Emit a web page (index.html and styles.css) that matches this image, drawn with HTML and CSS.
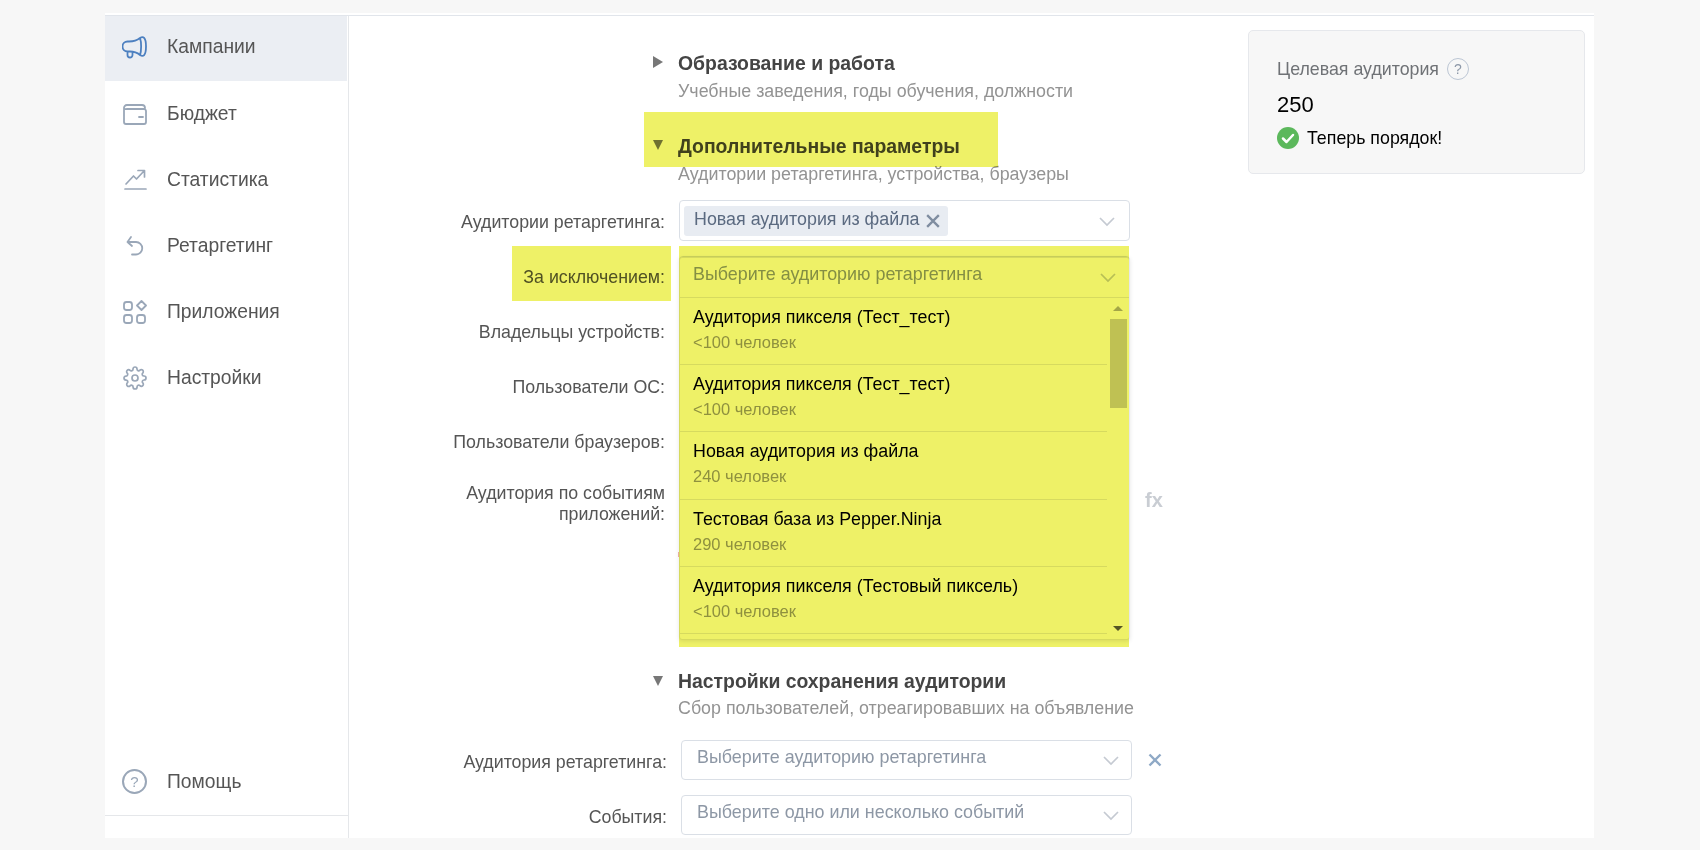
FILE: index.html
```html
<!DOCTYPE html>
<html lang="ru">
<head>
<meta charset="utf-8">
<title>Кампании</title>
<link rel="stylesheet" href="styles.css">
</head>
<body>
<div class="page">
  <div class="layout">
    <aside class="sidebar">
      <nav class="nav">
        <a class="nav-item active">
          <svg class="nav-icon" viewBox="0 0 26 24"><path d="M18 3C15 5.500 11 6.500 7 6.500H5.500a5 5 0 0 0 0 10H8c4 0 7 1 10 3.500M18 3c3-2 6-1 6 8.500S21 22 18 20M18 3c1.500 4 1.500 13 0 17M5.500 16.500V20a2.500 2.500 0 0 0 5 0v-3"/></svg>
          <span>Кампании</span>
        </a>
        <a class="nav-item">
          <svg class="nav-icon" viewBox="0 0 26 24"><path d="M2 6.500V20a2 2 0 0 0 2 2h18a2 2 0 0 0 2-2V9a2 2 0 0 0-2-2H4.500A2.500 2.500 0 0 1 2 6.500 3 3 0 0 1 5 3h15a3 3 0 0 1 3 3M17 15h4"/></svg>
          <span>Бюджет</span>
        </a>
        <a class="nav-item">
          <svg class="nav-icon thin" viewBox="0 0 26 24"><path d="M3 21h21M4 16l7.500-8 3 3L22 3M16 2.500h6.500V9"/></svg>
          <span>Статистика</span>
        </a>
        <a class="nav-item">
          <svg class="nav-icon" viewBox="0 0 26 24"><path d="M9 3L5.500 8l4.500 4M5.500 8H14a6 6 0 0 1 0 12.500H10"/></svg>
          <span>Ретаргетинг</span>
        </a>
        <a class="nav-item">
          <svg class="nav-icon" viewBox="0 0 26 24"><rect x="2" y="2" width="8" height="8" rx="2.500"/><rect x="2" y="15" width="8" height="8" rx="2.500"/><rect x="15" y="15" width="8" height="8" rx="2.500"/><path d="M19.500 1l4.500 4.500-4.500 4.500-4.500-4.500z"/></svg>
          <span>Приложения</span>
        </a>
        <a class="nav-item">
          <svg class="nav-icon gear" viewBox="0 0 24 24"><circle cx="12" cy="12" r="3"/><path d="M19.4 15a1.65 1.65 0 0 0 .33 1.82l.06.06a2 2 0 0 1 0 2.83 2 2 0 0 1-2.83 0l-.06-.06a1.65 1.65 0 0 0-1.82-.33 1.65 1.65 0 0 0-1 1.51V21a2 2 0 0 1-2 2 2 2 0 0 1-2-2v-.09A1.65 1.65 0 0 0 9 19.4a1.65 1.65 0 0 0-1.82.33l-.06.06a2 2 0 0 1-2.83 0 2 2 0 0 1 0-2.83l.06-.06a1.65 1.65 0 0 0 .33-1.82 1.65 1.65 0 0 0-1.51-1H3a2 2 0 0 1-2-2 2 2 0 0 1 2-2h.09A1.65 1.65 0 0 0 4.6 9a1.65 1.65 0 0 0-.33-1.82l-.06-.06a2 2 0 0 1 0-2.83 2 2 0 0 1 2.83 0l.06.06a1.65 1.65 0 0 0 1.82.33H9a1.65 1.65 0 0 0 1-1.51V3a2 2 0 0 1 2-2 2 2 0 0 1 2 2v.09a1.65 1.65 0 0 0 1 1.51 1.65 1.65 0 0 0 1.82-.33l.06-.06a2 2 0 0 1 2.83 0 2 2 0 0 1 0 2.83l-.06.06a1.65 1.65 0 0 0-.33 1.82V9a1.65 1.65 0 0 0 1.51 1H21a2 2 0 0 1 2 2 2 2 0 0 1-2 2h-.09a1.65 1.65 0 0 0-1.51 1z"/></svg>
          <span>Настройки</span>
        </a>
      </nav>
      <a class="nav-item help">
        <span class="help-icon">?</span>
        <span>Помощь</span>
      </a>
      <div class="sidebar-foot"></div>
    </aside>

    <main class="form">
      <section class="group first">
        <div class="group-head"><span class="arrow-right"></span><h3>Образование и работа</h3></div>
        <p class="group-sub">Учебные заведения, годы обучения, должности</p>
      </section>

      <section class="group second">
        <div class="group-head"><span class="arrow-down"></span><h3>Дополнительные параметры</h3></div>
        <p class="group-sub">Аудитории ретаргетинга, устройства, браузеры</p>
        <div class="rows">
          <div class="row">
            <label class="row-label">Аудитории ретаргетинга:</label>
            <div class="select tall">
              <span class="tag">Новая аудитория из файла<svg class="tag-x" viewBox="0 0 12 12"><path d="M1 1l10 10M11 1L1 11"/></svg></span>
              <svg class="chevron" viewBox="0 0 16 10"><path d="M1 1l7 7 7-7"/></svg>
            </div>
          </div>
          <div class="row">
            <label class="row-label">За исключением:</label>
            <div class="select"></div>
          </div>
          <div class="row">
            <label class="row-label">Владельцы устройств:</label>
            <div class="select"></div>
          </div>
          <div class="row">
            <label class="row-label">Пользователи ОС:</label>
            <div class="select"></div>
          </div>
          <div class="row">
            <label class="row-label">Пользователи браузеров:</label>
            <div class="select"></div>
          </div>
          <div class="row multi">
            <label class="row-label">Аудитория по событиям приложений:</label>
            <div class="select"></div>
            <span class="fx">fx</span>
          </div>
        </div>
      </section>

      <section class="group third">
        <div class="group-head"><span class="arrow-down"></span><h3>Настройки сохранения аудитории</h3></div>
        <p class="group-sub">Сбор пользователей, отреагировавших на объявление</p>
        <div class="rows lower">
          <div class="row">
            <label class="row-label">Аудитория ретаргетинга:</label>
            <div class="select">
              <span class="placeholder">Выберите аудиторию ретаргетинга</span>
              <svg class="chevron" viewBox="0 0 16 10"><path d="M1 1l7 7 7-7"/></svg>
            </div>
            <svg class="remove" viewBox="0 0 14 14"><path d="M1.500 1.500l11 11M12.500 1.500l-11 11"/></svg>
          </div>
          <div class="row">
            <label class="row-label">События:</label>
            <div class="select">
              <span class="placeholder">Выберите одно или несколько событий</span>
              <svg class="chevron" viewBox="0 0 16 10"><path d="M1 1l7 7 7-7"/></svg>
            </div>
          </div>
        </div>
      </section>

      <span class="clip-tick"></span>

      <div class="dropdown">
        <div class="dd-head">
          <span class="placeholder">Выберите аудиторию ретаргетинга</span>
          <svg class="chevron" viewBox="0 0 16 10"><path d="M1 1l7 7 7-7"/></svg>
        </div>
        <div class="dd-body">
          <ul class="dd-list">
            <li class="dd-option"><span class="dd-title">Аудитория пикселя (Тест_тест)</span><span class="dd-count">&lt;100 человек</span></li>
            <li class="dd-option"><span class="dd-title">Аудитория пикселя (Тест_тест)</span><span class="dd-count">&lt;100 человек</span></li>
            <li class="dd-option"><span class="dd-title">Новая аудитория из файла</span><span class="dd-count">240 человек</span></li>
            <li class="dd-option"><span class="dd-title">Тестовая база из Pepper.Ninja</span><span class="dd-count">290 человек</span></li>
            <li class="dd-option"><span class="dd-title">Аудитория пикселя (Тестовый пиксель)</span><span class="dd-count">&lt;100 человек</span></li>
          </ul>
          <div class="dd-scroll">
            <span class="scroll-up"></span>
            <span class="scroll-thumb"></span>
            <span class="scroll-down"></span>
          </div>
        </div>
      </div>

      <span class="mark mark-heading"></span>
      <span class="mark mark-label"></span>
      <span class="mark mark-dropdown"></span>
    </main>

    <aside class="summary">
      <div class="summary-card">
        <div class="summary-title">Целевая аудитория <span class="hint">?</span></div>
        <div class="summary-value">250</div>
        <div class="summary-status">
          <svg class="check" viewBox="0 0 22 22"><circle cx="11" cy="11" r="11"/><path d="M6 11.500l3.500 3.500L16 8"/></svg>
          <span>Теперь порядок!</span>
        </div>
      </div>
    </aside>
  </div>
</div>
</body>
</html>
```

FILE: styles.css
```css
* { box-sizing: border-box; }

html, body {
  margin: 0;
  height: 100%;
  overflow: hidden;
}

body {
  background: #f7f7f7;
  font-family: "Liberation Sans", Arial, sans-serif;
  color: #555;
}

.page {
  width: 1489px;
  height: 825px;
  margin: 13px 0 0 105px;
  background: #fff;
  padding-top: 2px;
}

.layout {
  display: flex;
  height: 823px;
  border-top: 1px solid #e1e5eb;
}

/* Sidebar */
.sidebar {
  width: 244px;
  flex: none;
  display: flex;
  flex-direction: column;
  border-right: 1px solid #e5e7ea;
}

.nav {
  flex: 1;
}

.nav-item {
  display: flex;
  align-items: center;
  gap: 19px;
  height: 66px;
  padding: 0 0 1px 17px;
  font-size: 19.300px;
  color: #555;
}

.nav-item.active {
  height: 65px;
  padding-bottom: 3px;
  background: #ebeef3;
  margin-right: 1px;
}

.nav-icon {
  width: 26px;
  height: 24px;
  flex: none;
  fill: none;
  stroke: #9aa7b8;
  stroke-width: 1.800;
  stroke-linecap: round;
  stroke-linejoin: round;
}

.active .nav-icon { stroke: #4d80c0; }
.nav-icon.thin { stroke-width: 1.700; }
.nav-icon.gear { stroke-width: 1.700; }

.help { height: 66px; }

.help-icon {
  width: 25px;
  height: 25px;
  margin-right: 1px;
  flex: none;
  border: 2px solid #9aa7b8;
  border-radius: 50%;
  color: #9aa7b8;
  font-size: 15px;
  line-height: 21px;
  text-align: center;
}

.sidebar-foot {
  height: 23px;
  border-top: 1px solid #e5e7ea;
}

/* Form */
.form {
  position: relative;
  width: 790px;
  flex: none;
}

.group-head {
  display: flex;
  align-items: center;
  padding-left: 304px;
  gap: 15px;
  height: 24px;
}

.group-head h3 {
  margin: 0;
  font-size: 19.400px;
  font-weight: 700;
  color: #444;
}

.group-sub {
  margin: 4px 0 0 329px;
  height: 24px;
  line-height: 24px;
  font-size: 17.850px;
  color: #939393;
}

.third .group-sub { margin-top: 3px; }

.group.first { padding-top: 35px; }
.group.second { margin-top: 31px; }
.group.third { margin-top: 12px; }

.arrow-right {
  width: 0;
  height: 0;
  margin-top: -2px;
  border-style: solid;
  border-width: 6px 0 6px 10px;
  border-color: transparent transparent transparent #777;
}

.arrow-down {
  width: 0;
  height: 0;
  margin-top: -2px;
  border-style: solid;
  border-width: 10px 5.500px 0;
  border-color: #777 transparent transparent;
}

.third .arrow-down { margin-top: 0; }

.rows {
  margin-top: 14px;
  display: flex;
  flex-direction: column;
  gap: 15px;
}

.rows.lower {
  margin-top: 20px;
  padding-left: 2px;
}

.row {
  display: grid;
  grid-template-columns: 316px 451px auto;
  column-gap: 14px;
  align-items: center;
  min-height: 40px;
}

.row.multi {
  align-items: start;
  margin-top: 1px;
  min-height: 180px;
}

.row-label {
  font-size: 17.800px;
  line-height: 21px;
  color: #555;
  text-align: right;
  padding-top: 3px;
}

.row.multi .row-label { padding: 6px 0 0 40px; }

.lower .row-label {
  margin-left: -2px;
  padding-top: 4px;
}

.select {
  position: relative;
  height: 40px;
  border: 1px solid #dadfe6;
  border-radius: 4px;
  background: #fff;
  display: flex;
  align-items: center;
  padding: 0 0 6px 15px;
}

.select.tall {
  height: 41px;
  padding: 0 0 0 4px;
}

.tag {
  display: flex;
  align-items: center;
  gap: 6px;
  height: 30px;
  padding: 0 8px 3px 10px;
  border-radius: 3px;
  background: #e8ecf2;
  color: #5b6a80;
  font-size: 17.850px;
}

.tag-x {
  width: 14px;
  height: 14px;
  margin-top: 4px;
  fill: none;
  stroke: #7f8da0;
  stroke-width: 2;
}

.chevron {
  position: absolute;
  right: 12px;
  top: 15px;
  width: 16px;
  height: 10px;
  fill: none;
  stroke: #c5cad2;
  stroke-width: 1.700;
}

.select.tall .chevron { right: 14px; top: 16px; }

.placeholder {
  color: #8d97a5;
  font-size: 17.900px;
}

.fx {
  font-size: 20px;
  font-weight: 700;
  color: #c9cdd3;
  margin: 12px 0 0 1px;
}

.remove {
  width: 14px;
  height: 14px;
  margin: 0 0 0 2px;
  fill: none;
  stroke: #8fa9c6;
  stroke-width: 2.400;
}

/* Dropdown */
.dropdown {
  position: absolute;
  left: 330px;
  top: 241px;
  width: 451px;
  height: 383px;
  background: #fff;
  border: 1px solid #e6e7ea;
  border-radius: 3px;
  box-shadow: 0 1px 4px rgba(0, 0, 0, .1);
}

.dd-head {
  position: relative;
  height: 40px;
  padding: 0 0 6px 13px;
  display: flex;
  align-items: center;
  border-bottom: 1px solid #e6e7ea;
}

.dd-head .chevron { top: 15px; right: 13px; }

.dd-body {
  display: flex;
}

.dd-list {
  list-style: none;
  margin: 0;
  padding: 0;
  width: 427px;
  flex: none;
}

.dd-option {
  display: flex;
  flex-direction: column;
  height: 67.200px;
  padding: 7px 0 0 13px;
  border-bottom: 1px solid #e6e7ea;
}

.dd-title {
  font-size: 17.850px;
  line-height: 24px;
  color: #000;
}

.dd-count {
  font-size: 16.500px;
  line-height: 24px;
  margin-top: 1px;
  color: #999;
}

.dd-scroll {
  flex: 1;
  position: relative;
}

.scroll-up, .scroll-down {
  position: absolute;
  left: 6px;
  width: 0;
  height: 0;
  border-style: solid;
}

.scroll-up {
  top: 8px;
  border-width: 0 5px 5px;
  border-color: transparent transparent #b0b0b0;
}

.scroll-down {
  top: 328px;
  border-width: 5px 5px 0;
  border-color: #5a5a5a transparent transparent;
}

.scroll-thumb {
  position: absolute;
  left: 3px;
  top: 21px;
  width: 17px;
  height: 89px;
  background: #cdcdcd;
}

.clip-tick {
  position: absolute;
  left: 329px;
  top: 536px;
  width: 1px;
  height: 5px;
  background: #f3b5a8;
}

/* Yellow highlights laid over the form */
.mark {
  position: absolute;
  background: #eef167;
  mix-blend-mode: multiply;
  pointer-events: none;
}

.mark-heading { left: 295px; top: 96px; width: 354px; height: 55px; }
.mark-label { left: 163px; top: 230px; width: 159px; height: 55px; }
.mark-dropdown { left: 330px; top: 230px; width: 450px; height: 401px; }

/* Summary */
.summary {
  flex: 1;
  padding: 14px 0 0 109px;
}

.summary-card {
  width: 337px;
  height: 144px;
  padding: 27px 0 0 28px;
  background: #f7f7f7;
  border: 1px solid #e6e8ec;
  border-radius: 5px;
}

.summary-title {
  display: flex;
  align-items: center;
  gap: 8px;
  font-size: 17.800px;
  line-height: 22px;
  color: #6f7276;
}

.hint {
  width: 22px;
  height: 22px;
  border: 1px solid #bcc6d4;
  border-radius: 50%;
  color: #8d98a8;
  font-size: 14px;
  line-height: 20px;
  text-align: center;
}

.summary-value {
  margin-top: 13px;
  font-size: 22px;
  line-height: 24px;
  color: #000;
}

.summary-status {
  display: flex;
  align-items: center;
  gap: 8px;
  margin-top: 10px;
  font-size: 17.800px;
  line-height: 22px;
  color: #000;
}

.check {
  width: 22px;
  height: 22px;
  flex: none;
}

.check circle { fill: #5cb85c; }
.check path {
  fill: none;
  stroke: #fff;
  stroke-width: 2.500;
  stroke-linecap: round;
  stroke-linejoin: round;
}
```
